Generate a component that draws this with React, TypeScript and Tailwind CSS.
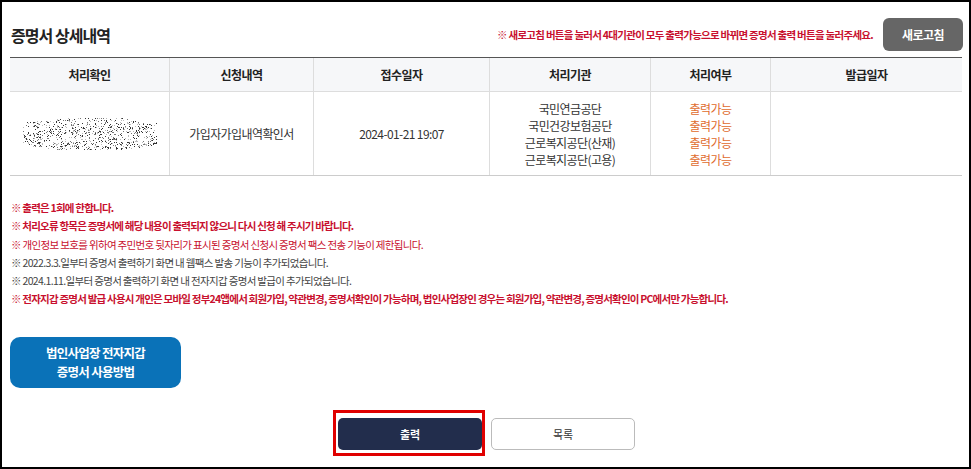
import React from "react";

const FONT = { fontFamily: '"Noto Sans CJK KR", "Noto Sans", sans-serif' };

function Noise() {
  const dots: { x: number; y: number; o: number }[] = [];
  let s = 12345;
  const rnd = () => {
    s = (s * 1103515245 + 12345) & 0x7fffffff;
    return s / 0x7fffffff;
  };
  for (let i = 0; i < 900; i++) {
    const x = rnd() * 134;
    const y = rnd() * 32;
    const dx = (x - 67) / 67;
    const dy = (y - 16) / 16;
    if (dx * dx * 0.6 + dy * dy > 1.05) continue;
    const o = rnd();
    dots.push({ x, y, o });
  }
  return (
    <svg width="134" height="32" viewBox="0 0 134 32">
      {dots.map((d, i) => (
        <rect
          key={i}
          x={Math.floor(d.x)}
          y={Math.floor(d.y)}
          width="1"
          height="1"
          fill={d.o > 0.6 ? "#333" : d.o > 0.3 ? "#777" : "#bbb"}
        />
      ))}
    </svg>
  );
}

const notes: { t: string; c: string }[] = [
  { t: "※ 출력은 1회에 한합니다.", c: "text-[#c8102e] font-bold text-[10.5px] tracking-[-0.78px]" },
  { t: "※ 처리오류 항목은 증명서에 해당 내용이 출력되지 않으니 다시 신청 해 주시기 바랍니다.", c: "text-[#c8102e] font-bold text-[10.5px] tracking-[-0.78px]" },
  { t: "※ 개인정보 보호를 위하여 주민번호 뒷자리가 표시된 증명서 신청시 증명서 팩스 전송 기능이 제한됩니다.", c: "text-[#c8102e] text-[10.5px] tracking-[-0.66px]" },
  { t: "※ 2022.3.3.일부터 증명서 출력하기 화면 내 웹팩스 발송 기능이 추가되었습니다.", c: "text-[#444] text-[10.5px] tracking-[-0.66px]" },
  { t: "※ 2024.1.11.일부터 증명서 출력하기 화면 내 전자지갑 증명서 발급이 추가되었습니다.", c: "text-[#444] text-[10.5px] tracking-[-0.66px]" },
  { t: "※ 전자지갑 증명서 발급 사용시 개인은 모바일 정부24앱에서 회원가입, 약관변경, 증명서확인이 가능하며, 법인사업장인 경우는 회원가입, 약관변경, 증명서확인이 PC에서만 가능합니다.", c: "text-[#c8102e] font-bold text-[10.5px] tracking-[-0.78px]" },
];

const orgs = ["국민연금공단", "국민건강보험공단", "근로복지공단(산재)", "근로복지공단(고용)"];

export default function App() {
  return (
    <div
      className="w-[971px] h-[469px] border-2 border-black bg-white flex flex-col overflow-hidden"
      style={FONT}
    >
      <div className="flex items-center justify-between pl-[9px] pr-[6px] pt-[16px] h-[49px]">
        <h1 className="text-[16px] font-bold text-[#222] tracking-[-0.06em]">증명서 상세내역</h1>
        <div className="flex items-center gap-[10px]">
          <p className="text-[10.5px] font-bold text-[#c8102e] tracking-[-0.72px]">
            ※ 새로고침 버튼을 눌러서 4대기관이 모두 출력가능으로 바뀌면 증명서 출력 버튼을 눌러주세요.
          </p>
          <button className="w-[80px] h-[33px] rounded-[6px] bg-[#666] text-white text-[12px] font-bold tracking-[-0.05em]">
            새로고침
          </button>
        </div>
      </div>

      <div className="mx-[8px] mt-[6px] w-[952px] border-t border-[#555] border-b border-b-[#ccc]">
        <div className="grid grid-cols-[160px_144px_176px_161px_120px_191px] h-[34px] bg-[#f6f7f9] border-b border-[#ddd] text-[12px] font-bold text-[#222] tracking-[-0.05em]">
          {["처리확인", "신청내역", "접수일자", "처리기관", "처리여부", "발급일자"].map((h, i) => (
            <div
              key={h}
              className={`flex items-center justify-center ${i < 5 ? "border-r border-[#ddd]" : ""}`}
            >
              {h}
            </div>
          ))}
        </div>
        <div className="grid grid-cols-[160px_144px_176px_161px_120px_191px] h-[83px] text-[12px] text-[#333] tracking-[-0.05em]">
          <div className="flex items-center justify-center border-r border-[#ddd]">
            <Noise />
          </div>
          <div className="flex items-center justify-center border-r border-[#ddd]">가입자가입내역확인서</div>
          <div className="flex items-center justify-center border-r border-[#ddd]">2024-01-21 19:07</div>
          <div className="flex flex-col items-center justify-center border-r border-[#ddd] leading-[17px]">
            {orgs.map((o) => (
              <span key={o}>{o}</span>
            ))}
          </div>
          <div className="flex flex-col items-center justify-center border-r border-[#ddd] leading-[17px] text-[#e06b2c]">
            {orgs.map((o) => (
              <span key={o}>출력가능</span>
            ))}
          </div>
          <div />
        </div>
      </div>

      <div className="flex flex-col pl-[9px] mt-[23px]">
        {notes.map((n, i) => (
          <p key={i} className={`${n.c} leading-[18.3px] whitespace-nowrap`}>
            {n.t}
          </p>
        ))}
      </div>

      <div className="pl-[8px] mt-[28px]">
        <button className="w-[171px] h-[51px] rounded-[10px] bg-[#0a72b8] text-white text-[12.5px] font-bold leading-[19px] tracking-[-0.06em]">
          법인사업장 전자지갑
          <br />
          증명서 사용방법
        </button>
      </div>

      <div className="flex justify-center items-start gap-[6px] mt-[22px] pr-[3px]">
        <div className="border-[3px] border-[#e00000] pt-[5px] pb-[3px] pl-[2px] pr-0">
          <button className="w-[144px] h-[32px] rounded-[5px] bg-[#222d4c] text-white text-[11px] font-bold">
            출력
          </button>
        </div>
        <button className="mt-[8px] w-[144px] h-[32px] rounded-[5px] bg-white border border-[#bbb] text-[#333] text-[11px]">
          목록
        </button>
      </div>
    </div>
  );
}
